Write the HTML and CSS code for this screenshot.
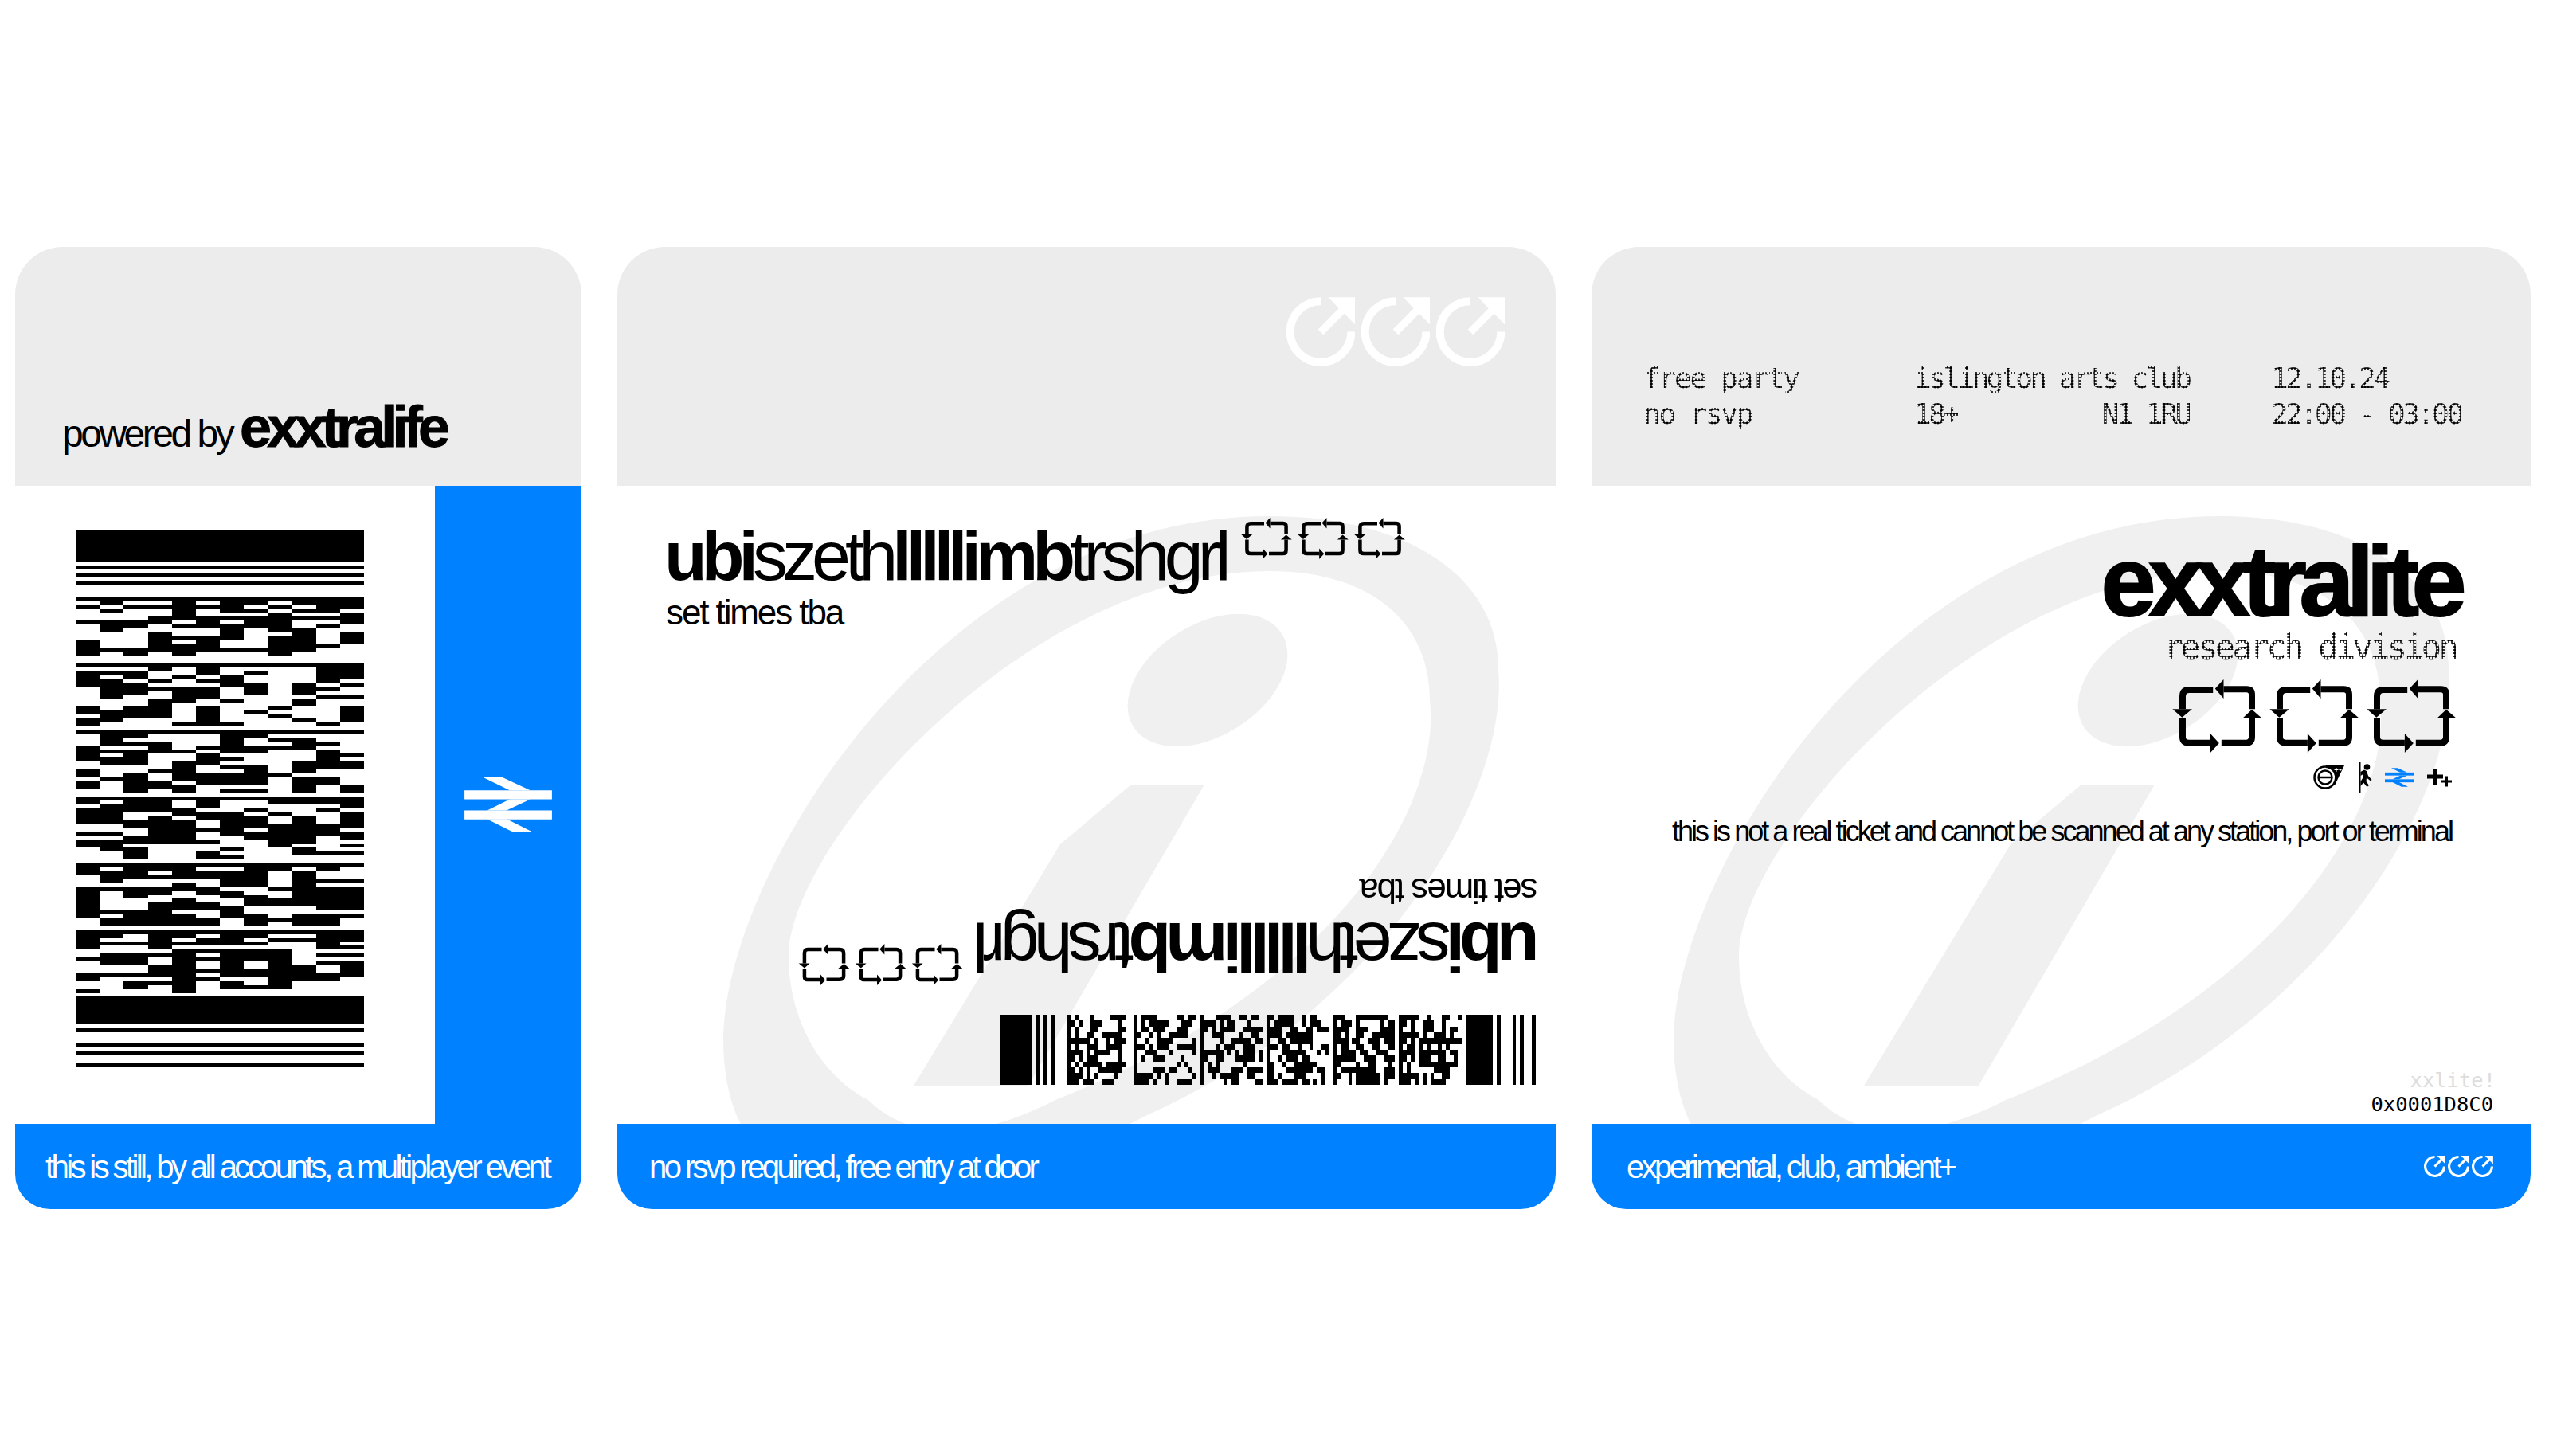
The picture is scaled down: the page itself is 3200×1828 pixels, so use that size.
FILE: index.html
```html
<!DOCTYPE html>
<html lang="en">
<head>
<meta charset="utf-8">
<title>exxtralite tickets</title>
<link rel="stylesheet" href="styles.css">
</head>
<body>
<svg class="defs" aria-hidden="true">
  <defs>
    <g id="pdf">
      <rect x="0" y="0" width="12" height="8"/>
      <rect x="0" y="119" width="12" height="7"/>
      <path class="pdf-lines" transform="translate(0 .5)" d="M0 9h12M0 11h12M0 13h12M0 127h12M0 131h12M0 133h12M0 136h12
      M0 17h12M1 18h1M4 18h1M6 18h2M9 18h3M0 19h1M2 19h5M8 19h1M10 19h2M1 20h1M4 20h1M6 20h2M9 20h2M4 21h1M8 21h1M11 21h1M3 22h9M0 23h4M5 23h1M7 23h2M11 23h1M1 24h2M4 24h5M10 24h1M1 25h1M6 25h1M8 25h2M3 26h1M6 26h1M9 26h1M11 26h1M3 27h4M8 27h2M11 27h1M0 28h1M3 28h1M5 28h1M8 28h2M11 28h1M0 29h1M3 29h3M8 29h3M0 30h10M0 31h1M2 31h1M4 31h1M8 31h1
      M0 34h12M3 35h1M5 35h1M10 35h2M0 36h3M5 36h1M7 36h1M10 36h2M0 37h1M2 37h1M4 37h1M6 37h1M10 37h2M0 38h2M3 38h1M5 38h2M10 38h1M0 39h3M6 39h2M9 39h1M11 39h1M1 40h5M7 40h1M9 40h2M1 41h2M4 41h2M7 41h1M9 41h1M1 42h1M4 42h2M10 42h2M3 43h2M6 43h1M9 43h1M3 44h1M9 44h1M0 45h1M2 45h2M5 45h1M8 45h1M11 45h1M0 46h4M5 46h1M7 46h1M11 46h1M1 47h3M5 47h1M8 47h1M11 47h1M0 48h2M5 48h1M9 48h1M11 48h1M0 49h1M4 49h3M10 49h1
      M0 51h12M1 52h2M6 52h2M1 53h1M6 53h1M8 53h2M1 54h3M6 54h1M9 54h2M0 55h1M3 55h1M5 55h5M0 56h5M6 56h2M10 56h1M0 57h1M2 57h1M5 57h1M10 57h2M0 58h3M5 58h2M10 58h1M1 59h2M4 59h2M9 59h3M4 60h1M6 60h2M9 60h3M0 61h1M3 61h2M7 61h1M9 61h1M0 62h1M2 62h1M4 62h5M1 63h2M4 63h4M9 63h2M0 64h1M2 64h2M5 64h3M9 64h2M0 65h1M2 65h3M9 65h1M11 65h1M2 66h1M4 66h1M6 66h2M9 66h1M11 66h1
      M0 68h12M0 69h1M2 69h2M5 69h1M8 69h4M1 70h3M5 70h1M11 70h1M0 71h5M7 71h1M10 71h1M0 72h2M4 72h3M8 72h1M11 72h1M0 73h2M3 73h1M5 73h3M9 73h1M11 73h1M0 74h5M6 74h2M9 74h1M11 74h1M2 75h3M6 75h6M3 76h4M8 76h3M0 77h2M3 77h2M6 77h6M2 78h3M7 78h3M11 78h1M0 79h6M8 79h2M0 80h2M8 80h1M11 80h1M1 81h2M6 81h1M9 81h1M2 82h1M5 82h1M9 82h3M2 83h1M5 83h2
      M0 85h12M0 86h1M2 86h3M7 86h2M10 86h1M0 87h3M4 87h4M9 87h1M1 88h7M9 88h1M1 89h1M6 89h2M9 89h3M4 90h1M6 90h2M9 90h1M0 91h6M8 91h4M0 92h1M2 92h2M5 92h2M9 92h3M0 93h1M2 93h1M6 93h2M9 93h3M0 94h1M4 94h1M7 94h5M0 95h1M3 95h3M7 95h5M0 96h1M3 96h4M10 96h2M0 97h4M6 97h1M0 98h1M2 98h3M6 98h2M9 98h3M1 99h5M7 99h4M1 100h5M7 100h1M9 100h2
      M0 102h12M0 103h2M3 103h2M6 103h2M10 103h2M0 104h1M3 104h1M5 104h2M8 104h4M0 105h8M10 105h1M0 106h1M3 106h1M10 106h2M4 107h5M1 108h4M6 108h3M10 108h2M0 109h3M4 109h5M1 110h2M4 110h1M6 110h1M8 110h1M10 110h2M3 111h2M6 111h1M8 111h2M11 111h1M3 112h7M11 112h1M0 113h5M6 113h6M0 114h1M4 114h2M8 114h3M2 115h3M6 115h1M8 115h1M2 116h1M4 116h1M6 116h3M0 117h1M4 117h1"/>
    </g>
    <g id="swirl">
      <path fill-rule="evenodd" d="M1594 648C1760 648 1881 720 1881 840C1895 1000 1730 1270 1440 1400C1300 1475 1120 1510 1010 1480C940 1460 908 1390 908 1306C908 1100 1180 648 1594 648ZM1594 717C1290 717 990 1060 990 1200C990 1280 1030 1350 1090 1381C1150 1440 1240 1425 1325 1381C1680 1240 1810 1010 1795 880C1795 780 1720 717 1594 717Z"/>
      <ellipse cx="1516" cy="854" rx="110" ry="70" transform="rotate(-32 1516 854)"/>
      <polygon points="1420,985 1512,985 1291,1363 1147,1363 1331,1060"/>
    </g>
    <g id="loop">
      <g class="loop-lines">
        <path d="M153 39H63Q38 39 38 64V112"/>
        <path d="M193 37H280Q300 37 300 57V112"/>
        <path d="M300 147V217Q300 240 278 240H185"/>
        <path d="M143 240H63Q38 240 38 217V147"/>
      </g>
      <polygon points="0,112 74,112 36,144"/>
      <polygon points="161,35 193,0 193,72"/>
      <polygon points="300,114 265,147 338,147"/>
      <polygon points="176,241 143,205 143,277"/>
    </g>
    <g id="out">
      <path class="out-arc" d="M129 15A115 115 0 1 0 244 130"/>
      <polygon points="158,0 258,0 258,102 218,62 139,141 119,121 197,42"/>
    </g>
    <g id="rail">
      <rect x="36" y="97" width="331" height="34"/>
      <rect x="36" y="173" width="331" height="34"/>
      <polygon points="107,48 180,48 285,97 207,97"/>
      <polygon points="207,131 285,131 195,173 122,173"/>
      <polygon points="122,206 197,206 296,256 222,256"/>
    </g>
  </defs>
</svg>

<main class="tickets">
  <article class="card card-narrow">
    <header class="head head-bottom">
      <p class="powered">powered by <b>exxtralife</b></p>
    </header>
    <section class="body body-split">
      <div class="code-wrap">
        <svg class="code-tall" viewBox="0 0 12 137" preserveAspectRatio="none"><use href="#pdf"/></svg>
      </div>
      <div class="rail-col">
        <svg class="rail-big" viewBox="36 48 331 208"><use href="#rail"/></svg>
      </div>
    </section>
    <footer class="foot"><span>this is still, by all accounts, a multiplayer event</span></footer>
  </article>

  <article class="card">
    <header class="head head-icons">
      <svg class="out-big" viewBox="0 0 258 260"><use href="#out"/></svg>
      <svg class="out-big" viewBox="0 0 258 260"><use href="#out"/></svg>
      <svg class="out-big" viewBox="0 0 258 260"><use href="#out"/></svg>
    </header>
    <section class="body body-stub">
      <svg class="swirl" viewBox="775 610 1178 801" preserveAspectRatio="xMinYMin slice"><use href="#swirl"/></svg>
      <div class="act">
        <div class="act-line">
          <h2 class="act-name">ubi<span>szeth</span>lllllimb<span>trshgrl</span></h2>
          <div class="loops-small">
            <svg class="loop-small" viewBox="0 0 338 277"><use href="#loop"/></svg>
            <svg class="loop-small" viewBox="0 0 338 277"><use href="#loop"/></svg>
            <svg class="loop-small" viewBox="0 0 338 277"><use href="#loop"/></svg>
          </div>
        </div>
        <p class="act-sub">set times tba</p>
      </div>
      <div class="lower">
        <div class="act act-flip">
          <div class="act-line">
            <h2 class="act-name">ubi<span>szeth</span>lllllimb<span>trshgrl</span></h2>
            <div class="loops-small">
              <svg class="loop-small" viewBox="0 0 338 277"><use href="#loop"/></svg>
              <svg class="loop-small" viewBox="0 0 338 277"><use href="#loop"/></svg>
              <svg class="loop-small" viewBox="0 0 338 277"><use href="#loop"/></svg>
            </div>
          </div>
          <p class="act-sub">set times tba</p>
        </div>
        <svg class="code-wide" viewBox="0 0 137 12" preserveAspectRatio="none"><g transform="matrix(0 1 1 0 0 0)"><use href="#pdf"/></g></svg>
      </div>
    </section>
    <footer class="foot"><span>no rsvp required, free entry at door</span></footer>
  </article>

  <article class="card">
    <header class="head head-info">
      <div class="info info-a"><p class="dots">free party</p><p class="dots">no rsvp</p></div>
      <div class="info info-b">
        <p class="dots">islington arts club</p>
        <p class="info-split"><span class="dots">18+</span><span class="dots">N1 1RU</span></p>
      </div>
      <div class="info info-c"><p class="dots">12.10.24</p><p class="dots">22:00 - 03:00</p></div>
    </header>
    <section class="body body-brand">
      <svg class="swirl" viewBox="805 610 1179 801" preserveAspectRatio="xMinYMin slice"><use href="#swirl"/></svg>
      <h1 class="brand">exxtralite</h1>
      <p class="dots division">research division</p>
      <div class="loops-big">
        <svg class="loop-big" viewBox="0 0 338 277"><use href="#loop"/></svg>
        <svg class="loop-big" viewBox="0 0 338 277"><use href="#loop"/></svg>
        <svg class="loop-big" viewBox="0 0 338 277"><use href="#loop"/></svg>
      </div>
      <div class="marks">
        <svg class="mark-e" viewBox="0 0 39 30">
          <polygon points="16,0 39,0 27,25 16,14"/>
          <circle class="mark-ring" cx="15" cy="15" r="13.5"/>
          <circle class="mark-core" cx="15" cy="15" r="12"/>
          <circle class="mark-ring" cx="15" cy="15" r="8.5"/>
          <path class="mark-e-bar" d="M7 15H23"/>
          <path class="mark-plus" d="M29 3v5M26.500 5.500h5M34 4v3M32.500 5.500h3"/>
        </svg>
        <svg class="mark-man" viewBox="0 0 16 38">
          <rect x="0" y="0" width="1.500" height="38"/>
          <circle cx="9.500" cy="6" r="3.800"/>
          <path d="M1.500 12L6 9.500L9 11L11 17L15.500 22L14 23.500L9 19.500L8.500 24L12 29L9.500 31L5 25.500L1.500 30L1.500 24L4 20L4.500 15L1.500 17Z"/>
        </svg>
        <svg class="mark-rail" viewBox="36 48 331 208"><use href="#rail"/></svg>
        <svg class="mark-plus-pair" viewBox="0 0 31 23"><path d="M0 7.500h7.500V0h5v7.500H20v5h-7.500V20h-5v-7.500H0Z"/><path d="M18 14.500h5V9.500h3v5h5v3h-5v5h-3v-5h-5Z"/></svg>
      </div>
      <p class="disclaimer">this is not a real ticket and cannot be scanned at any station, port or terminal</p>
      <div class="serial">
        <p class="serial-ghost">xxlite!</p>
        <p class="serial-code">0x0001D8C0</p>
      </div>
    </section>
    <footer class="foot foot-split">
      <span>experimental, club, ambient+</span>
      <div class="out-row">
        <svg class="out-small" viewBox="0 0 258 260"><use href="#out"/></svg>
        <svg class="out-small" viewBox="0 0 258 260"><use href="#out"/></svg>
        <svg class="out-small" viewBox="0 0 258 260"><use href="#out"/></svg>
      </div>
    </footer>
  </article>
</main>
</body>
</html>
```

FILE: styles.css
```css
* { box-sizing: border-box; margin: 0; padding: 0; }
html, body { background: #fff; }
body {
  width: 3200px;
  height: 1828px;
  overflow: hidden;
  font-family: "Liberation Sans", Arial, sans-serif;
  color: #000;
}
.defs { position: absolute; width: 0; height: 0; }
.pdf-lines { stroke: #000; stroke-width: 1; fill: none; }
.loop-lines path { fill: none; stroke: #000; stroke-width: 24; }
.out-arc { fill: none; stroke-width: 30; stroke: currentColor; }

.tickets {
  display: grid;
  grid-template-columns: 711px 1178px 1179px;
  column-gap: 45px;
  padding: 310px 0 0 19px;
}
.card { display: flex; flex-direction: column; height: 1208px; }

.head { height: 300px; background: #ececec; border-radius: 60px 60px 0 0; flex: none; }
.head-bottom { display: flex; align-items: flex-end; padding: 0 0 35px 59px; }
.powered { font-size: 48px; line-height: 60px; letter-spacing: -3.500px; white-space: nowrap; }
.powered b { font-size: 72px; letter-spacing: -5.800px; line-height: 60px; -webkit-text-stroke: 1px #000; }

.body { flex: 1; position: relative; overflow: hidden; }
.foot {
  height: 107px;
  flex: none;
  background: #0081ff;
  color: #fff;
  border-radius: 0 0 44px 44px;
  display: flex;
  align-items: center;
  padding: 2px 0 0 40px;
  font-size: 40px;
  letter-spacing: -3.600px;
  white-space: nowrap;
}
.card-narrow .foot { padding-left: 38px; }
.foot-split { justify-content: space-between; padding: 2px 47px 0 44px; }

.body-split { display: flex; }
.code-wrap { flex: 1; padding: 56px 0 0 76px; }
.code-tall { display: block; width: 362px; height: 674px; shape-rendering: crispEdges; }
.rail-col { width: 184px; background: #0081ff; display: flex; align-items: center; justify-content: center; }
.rail-big { width: 110px; height: 69px; fill: #fff; }

.head-icons { display: flex; justify-content: flex-end; gap: 8px; padding: 63px 64px 0 0; color: #fff; fill: #fff; }
.out-big { width: 86px; height: 87px; }
.out-row { display: flex; gap: 3px; color: #fff; fill: #fff; margin-top: -2px; }
.out-small { width: 27px; height: 27px; }

.swirl { position: absolute; left: 0; top: 0; width: 100%; height: 100%; fill: #f0f0f0; }
.body-stub { display: flex; flex-direction: column; justify-content: space-between; padding: 44px 0 49px; }
.act { position: relative; padding-left: 59px; width: fit-content; }
.act-line { display: flex; gap: 19px; }
.act-name { font-size: 88px; line-height: 88px; font-weight: 700; letter-spacing: -7px; white-space: nowrap; }
.act-name span { font-weight: 400; }
.act-sub { font-size: 44px; line-height: 44px; margin-top: 5px; padding-left: 2px; letter-spacing: -2.100px; }
.loops-small { display: flex; gap: 7px; margin-top: -4px; }
.loop-small { width: 64px; height: 52px; }
.lower { position: relative; display: flex; flex-direction: column; align-items: flex-end; }
.act-flip { transform: rotate(180deg); margin-right: 20px; padding-left: 0; }
.code-wide { display: block; width: 672px; height: 88px; margin: 41px 25px 0 0; shape-rendering: crispEdges; }

.head-info { display: flex; align-items: flex-start; padding: 142px 0 0 65px; }
.dots {
  font-family: "DejaVu Sans Mono", "Liberation Mono", monospace;
  font-weight: 400;
  font-size: 36px;
  line-height: 45px;
  letter-spacing: -3.300px;
  white-space: pre;
  background-image: radial-gradient(circle at 50% 50%, #000 1.5px, transparent 1.9px);
  background-size: 4px 4px;
  -webkit-background-clip: text;
  background-clip: text;
  color: transparent;
}
.info-a { width: 340px; }
.info-a .dots { letter-spacing: -2.200px; }
.info-b { width: 448px; }
.info-b > .dots { letter-spacing: -3.500px; }
.info-b .info-split { display: flex; justify-content: space-between; width: 346px; }

.body-brand { display: flex; flex-direction: column; align-items: flex-end; padding: 60px 47px 10px 0; }
.brand { position: relative; font-size: 124px; line-height: 120px; font-weight: 700; letter-spacing: -9.500px; margin-right: 43px; -webkit-text-stroke: 2px #000; }
.division { position: relative; font-size: 42px; letter-spacing: -3.700px; margin: 0 47px 0 0; }
.loops-big { position: relative; display: flex; gap: 9px; margin: 18px 46px 0 0; }
.loop-big { width: 113px; height: 92px; }
.marks { position: relative; display: flex; align-items: center; gap: 16px; margin: 12px 52px 0 0; }
.mark-e { width: 39px; height: 30px; margin-right: 3px; }
.mark-ring { fill: none; stroke: #000; stroke-width: 2.500; }
.mark-core { fill: #fff; }
.mark-e-bar { stroke: #000; stroke-width: 2.500; }
.mark-plus { stroke: #fff; stroke-width: 1; fill: none; }
.mark-man { width: 16px; height: 38px; }
.mark-rail { width: 37px; height: 24px; fill: #0081ff; }
.mark-plus-pair { width: 31px; height: 23px; }
.disclaimer { position: relative; font-size: 36px; line-height: 44px; letter-spacing: -2.970px; margin: 27px 52px 0 0; white-space: nowrap; }
.serial { position: relative; margin-top: auto; text-align: right; font-family: "DejaVu Sans Mono", monospace; font-size: 25.500px; line-height: 30px; }
.serial-ghost { color: #ddd; margin-right: -3px; }
.serial-code { color: #000; }
```
